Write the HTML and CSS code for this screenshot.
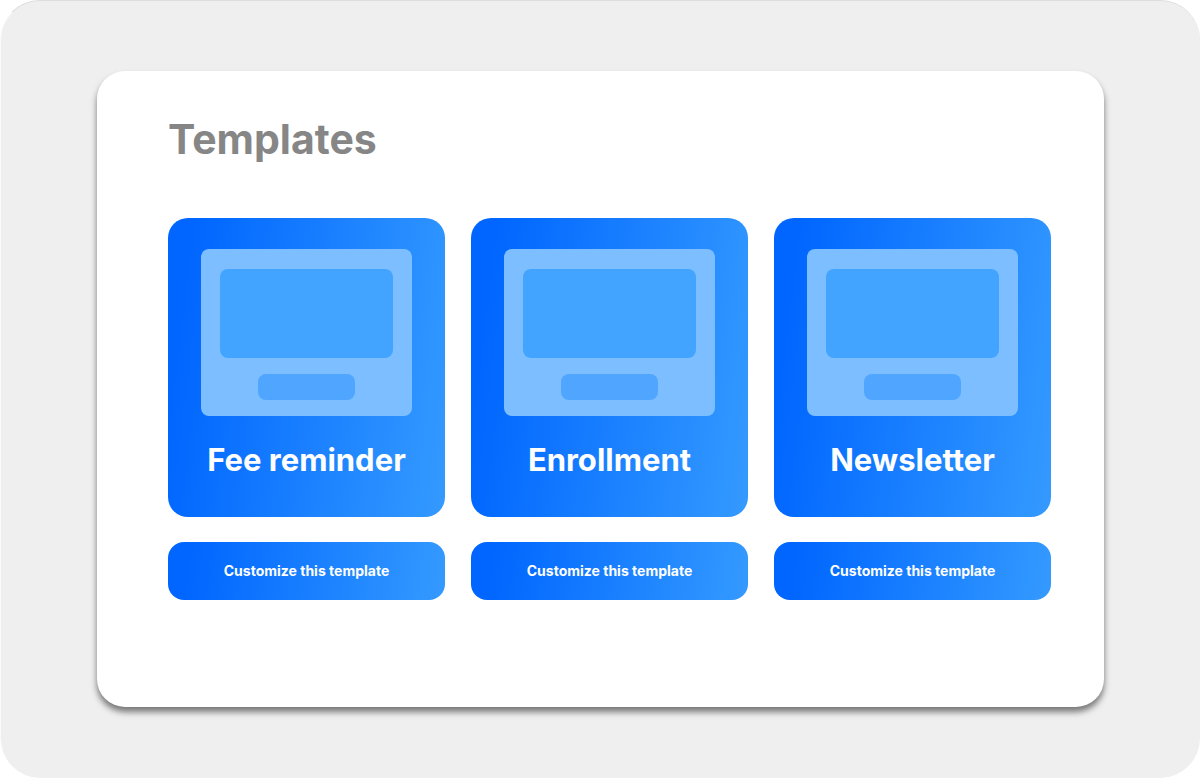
FILE: index.html
```html
<!DOCTYPE html>
<html lang="en">

<head>
  <meta charset="UTF-8">
  <meta name="viewport" content="width=device-width, initial-scale=1.0">
  <title>Templates</title>
  <link rel="stylesheet" href="styles.css">
</head>

<body>
  <div class="Page">
    <main class="Panel">
      <h1>Templates</h1>
      <ul class="TemplateList">
        <li class="Template">
          <div class="Card">
            <div class="Preview">
              <div class="Preview-image"></div>
              <div class="Preview-button"></div>
            </div>
            <h2 id="feeReminder">Fee reminder</h2>
          </div>
          <button type="button" aria-describedby="feeReminder">Customize this template</button>
        </li>
        <li class="Template">
          <div class="Card">
            <div class="Preview">
              <div class="Preview-image"></div>
              <div class="Preview-button"></div>
            </div>
            <h2 id="enrollment">Enrollment</h2>
          </div>
          <button type="button" aria-describedby="enrollment">Customize this template</button>
        </li>
        <li class="Template">
          <div class="Card">
            <div class="Preview">
              <div class="Preview-image"></div>
              <div class="Preview-button"></div>
            </div>
            <h2 id="newsletter">Newsletter</h2>
          </div>
          <button type="button" aria-describedby="newsletter">Customize this template</button>
        </li>
      </ul>
    </main>
  </div>
</body>

</html>
```
FILE: styles.css
```css
* {
  box-sizing: border-box;
}

body {
  background: #fff;
  font-family: Inter, Arial, sans-serif;
  margin: 0;
}

.Page {
  display: flex;
  min-height: 100vh;
  padding: 70px 96px 71px;
  background: #efefef;
  border-top: 1px solid #dedede;
  border-left: 1px solid #fafafa;
  border-radius: 40px;
}

.Panel {
  flex: 1;
  padding: 43px 53px 54px 71px;
  background: #fff;
  border-radius: 28px;
  box-shadow: 0 5px 6px rgba(0, 0, 0, .5);
}

h1 {
  margin: 0 0 54px;
  color: #868686;
  font-size: 41px;
  line-height: 50px;
  font-weight: bold;
}

.TemplateList {
  display: grid;
  grid-template-columns: repeat(3, 1fr);
  gap: 26px;
  margin: 0;
  padding: 0;
  list-style: none;
}

.Template {
  display: flex;
  flex-direction: column;
  gap: 25px;
}

.Card,
button {
  background: linear-gradient(97deg, #0066ff 8%, #3399ff 98%);
  color: #fff;
}

.Card {
  padding: 31px 33px 37px;
  border-radius: 20px;
}

.Preview {
  display: flex;
  flex-direction: column;
  align-items: center;
  gap: 16px;
  padding: 20px 19px 16px;
  background: #7cbeff;
  border-radius: 8px;
}

.Preview-image {
  width: 100%;
  height: 89px;
  background: #43a4ff;
  border-radius: 8px;
}

.Preview-button {
  width: 56%;
  height: 26px;
  background: #50a6ff;
  border-radius: 8px;
}

h2 {
  margin: 24px 0 0;
  font-size: 31px;
  line-height: 40px;
  font-weight: bold;
  text-align: center;
  white-space: nowrap;
}

button {
  height: 58px;
  padding: 0 0 2px;
  border: 0;
  border-radius: 16px;
  font-family: inherit;
  font-size: 14px;
  font-weight: bold;
  cursor: pointer;
}

button:hover,
button:focus {
  opacity: .9;
}
```
